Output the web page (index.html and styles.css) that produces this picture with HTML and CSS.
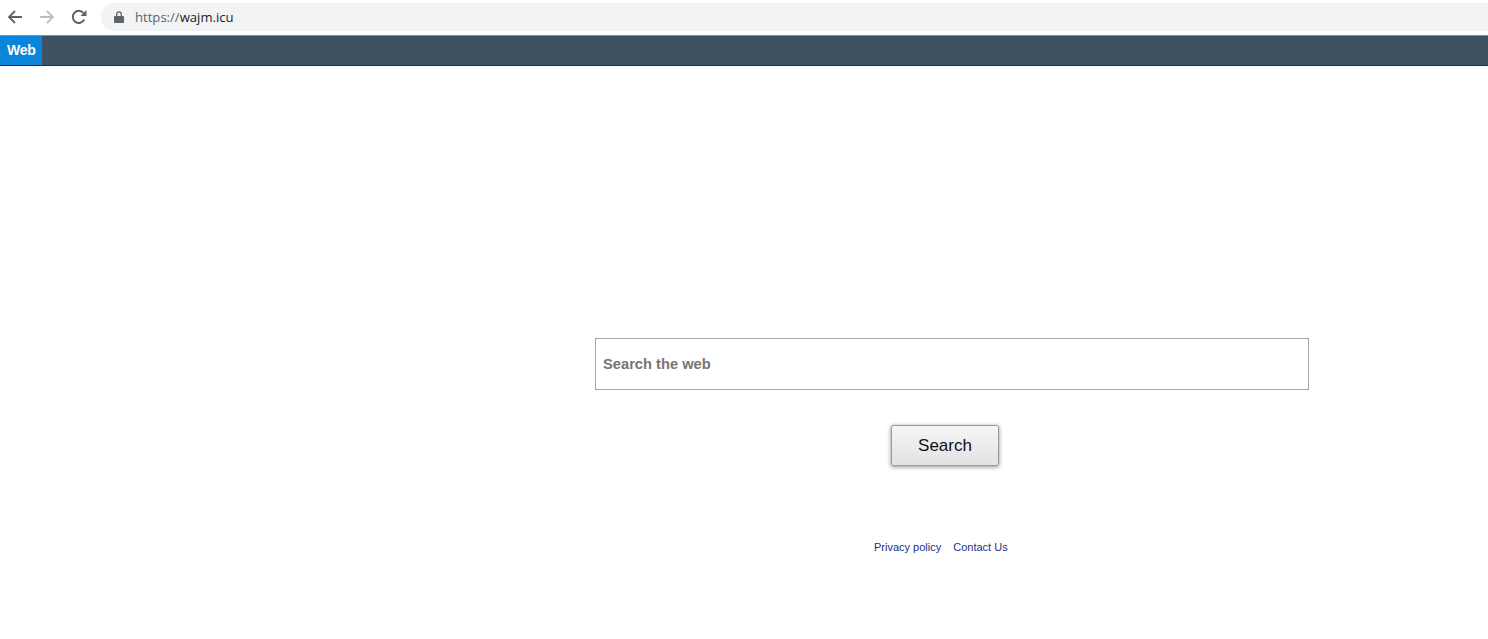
FILE: index.html
```html
<!DOCTYPE html>
<html lang="en">
<head>
<meta charset="utf-8">
<title>wajm.icu</title>
<link rel="stylesheet" href="styles.css">
</head>
<body>
<header class="chrome">
  <svg class="nav-icon back" viewBox="0 0 16 16" width="16" height="16"><path d="M15 8H2M8 2 2 8l6 6" fill="none" stroke="#5f6368" stroke-width="1.8"/></svg>
  <svg class="nav-icon forward" viewBox="0 0 16 16" width="16" height="16"><path d="M1 8h13M8 2l6 6-6 6" fill="none" stroke="#bdbdbd" stroke-width="1.8"/></svg>
  <svg class="nav-icon reload" viewBox="0 0 16 16" width="16" height="16"><path d="M13.2 10.5A6 6 0 1 1 12.4 4" fill="none" stroke="#5f6368" stroke-width="2"/><path d="M15.5 1v6h-6z" fill="#5f6368"/></svg>
  <div class="omnibox">
    <svg class="lock" viewBox="0 0 10 12" width="10" height="12"><path d="M1 5h8a1 1 0 0 1 1 1v5a1 1 0 0 1-1 1H1a1 1 0 0 1-1-1V6a1 1 0 0 1 1-1z" fill="#5f6368"/><path d="M2.7 5V3.2a2.3 2.3 0 0 1 4.6 0V5" fill="none" stroke="#5f6368" stroke-width="1.3"/></svg>
    <span class="url"><span class="scheme">https://</span>wajm.icu</span>
  </div>
</header>
<nav class="tabs"><a class="tab" href="#">Web</a></nav>
<main class="content">
  <form class="search">
    <input class="query" type="text" placeholder="Search the web">
    <button class="submit" type="button">Search</button>
  </form>
  <footer class="links">
    <a href="#">Privacy policy</a>
    <a href="#">Contact Us</a>
  </footer>
</main>
</body>
</html>
```
FILE: styles.css
```css
* { box-sizing: border-box; }
html, body { margin: 0; height: 100%; overflow: hidden; background: #fff; }
body { font-family: "Liberation Sans", Arial, sans-serif; }

.chrome {
  height: 35px;
  display: flex;
  align-items: center;
  padding: 0 0 1px 7px;
  background: #fff;
}
.nav-icon { flex: none; }
.forward { margin-left: 16px; }
.reload { margin-left: 16px; }
.omnibox {
  flex: 1;
  height: 28px;
  margin-left: 14px;
  padding-left: 13px;
  display: flex;
  align-items: center;
  background: #f1f3f4;
  border-radius: 14px 0 0 14px;
}
.lock { flex: none; margin-top: -1px; }
.url {
  margin-left: 11px;
  font: 13.1px "Open Sans", sans-serif;
  color: #202124;
}
.scheme { color: #5f6368; }

.tabs {
  height: 31px;
  background: #3f5261;
  border-top: 1px solid #8a8f93;
  border-bottom: 1px solid #22313c;
  display: flex;
}
.tab {
  width: 42px;
  padding-left: 7px;
  background: #0a85d9;
  color: #fff;
  font-size: 14px;
  font-weight: 700;
  letter-spacing: -0.2px;
  line-height: 28px;
  text-decoration: none;
}

.content {
  display: flex;
  flex-direction: column;
}
.search {
  width: 714px;
  margin: 272px 0 0 595px;
  display: flex;
  flex-direction: column;
}
.query {
  width: 714px;
  height: 52px;
  padding: 0 7px 1px;
  border: 1px solid #a6a6a6;
  outline: none;
  font: 700 14.7px "Liberation Sans", sans-serif;
}
.query::placeholder { color: #757575; opacity: 1; }
.submit {
  width: 108px;
  height: 41px;
  margin: 35px 0 0 296px;
  border: 1px solid #9a9a9a;
  border-radius: 2px;
  background: linear-gradient(#f6f6f6, #e2e2e2);
  box-shadow: 0 1px 4px rgba(0, 0, 0, .45);
  font: 17px "Liberation Sans", sans-serif;
  color: #111;
}
.links {
  display: flex;
  gap: 12px;
  margin: 75px 0 0 874px;
  font-size: 11px;
}
.links a { color: #1a2f86; text-decoration: none; }
```
